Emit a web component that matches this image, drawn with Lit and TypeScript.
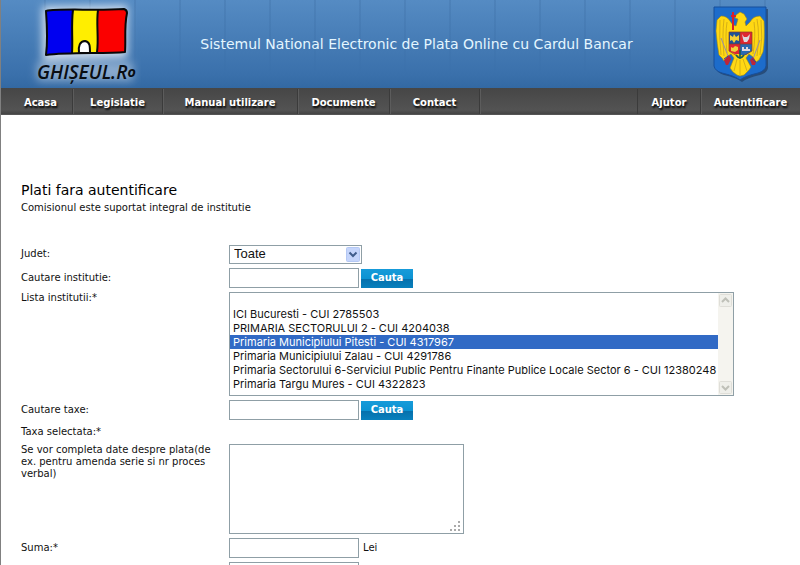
import { LitElement, html, css, svg } from "lit";
import { customElement, state } from "lit/decorators.js";

const flagLogo = svg`
  <svg class="logo" viewBox="0 0 120 88" width="120" height="88" role="img" aria-label="Ghiseul.ro">
    <defs>
      <filter id="glow" x="-20%" y="-20%" width="140%" height="140%">
        <feGaussianBlur stdDeviation="4"></feGaussianBlur>
      </filter>
    </defs>
    <g filter="url(#glow)" fill="#fff" stroke="#fff">
      <path d="M24 9L104 8L104 55L24 58Z" stroke-width="5" opacity=".75"></path>
      <path d="M18 64H110V79H18Z" opacity=".4" stroke-width="4"></path>
    </g>
    <path d="M25 11C39 8 74 11 103 9Q106 10 106 13C103 27 105 40 104 52C84 54 49 52 25 55C27 40 26 25 25 11Z" fill="#fe0"></path>
    <path d="M25 11Q37 8 52 10L51 53L25 55Q27 32 25 11Z" fill="#0000f0"></path>
    <path d="M77 10L103 9Q106 10 106 13C103 27 105 40 104 52L76 53Z" fill="#fb0000"></path>
    <g fill="none" stroke="#080808" stroke-width="2" stroke-linejoin="round" stroke-linecap="round">
      <path d="M25 11C39 8 74 11 103 9Q106 10 106 13C103 27 105 40 104 52C84 54 49 52 25 55C27 40 26 25 25 11Z"></path>
      <path d="M52 10C50 24 52 40 51 53"></path>
      <path d="M77 10C75 24 78 38 76 52"></path>
      <path d="M58 53C57 46 59 41 64 41C69 42 69 46 69 53Z" fill="#fff"></path>
    </g>
    <text x="16" y="79" class="brand">GHIȘEUL.R<tspan class="brand-small" dy="-2">O</tspan></text>
  </svg>`;

const coatOfArms = svg`
  <svg class="arms" viewBox="0 0 57 78" width="57" height="78" role="img" aria-label="Stema Romaniei">
    <path d="M3 4H55V63Q54 68 47 70Q34 73 29 77Q24 73 11 70Q4 68 3 63Z" fill="#1d3558" opacity=".6"></path>
    <path d="M1 2H53V61Q52 66 45 68Q32 71 27 75Q22 71 9 68Q2 66 1 61Z" fill="#1d6ccb" stroke="#174f9b"></path>
    <path d="M23 21Q19 20 17 16Q14 11 8 11L4 15L3 26Q4 39 6 50L9 53L11 56L15 51L18 49L21 53L17 63L20 67L24 70L27 71L31 70L36 65L38 62L33 53L36 49L40 52L43 57L46 55L50 47Q52 35 51 16L47 11Q40 11 37 17L33 21L32 17L34 14L31 9L27 7L23 10L22 13L25 14Z" fill="#ffd813" stroke="#9c8618" stroke-width=".6"></path>
    <g fill="none" stroke="#c39d18" stroke-width=".7">
      <path d="M7 15Q6 32 8 50M11 14Q9 30 11 51M14 17Q12 30 14 48M48 15Q50 32 47 50M44 14Q47 30 44 51M41 17Q43 30 40 49"></path>
      <path d="M24 54L21 66M27 55V70M30 54L34 66"></path>
    </g>
    <path d="M18 11H23M20 7V25" stroke="#d71f2b" stroke-width="2"></path>
    <path d="M8 33L15 51M47 35L40 54" stroke="#9791a4" stroke-width="1"></path>
    <path d="M11 55L16 50L18 54L15 60L13 60ZM37 55L40 52L43 57L42 60L39 60Z" fill="#bd2539"></path>
    <path d="M11 54L15 51M39 54L43 57" stroke="#2b4f9a" stroke-width="1"></path>
    <path d="M16 27H27V39H16Z" fill="#1d5298"></path>
    <path d="M27 27H39V39H27ZM16 39H27V49L22 49L16 46Z" fill="#df2632"></path>
    <path d="M27 39H39V46L33 50H27Z" fill="#2969b3"></path>
    <g fill="#f3d039">
      <path d="M17 30L20 32L21 29L23 32L26 30L26 36L23 35L21 38L19 35L17 36Z"></path>
      <path d="M18 42L20 43L22 41L25 42L25 45L22 47L18 46Z"></path>
    </g>
    <path d="M29 29L31 32L34 32L37 29L36 34L34 37L31 37L30 34ZM29 45V42H31V44H33V42H35V44H37V46H29Z" fill="#ddd8df"></path>
    <path d="M16 27H39V46Q34 49 27 52Q20 49 16 46ZM27 27V51M16 39H39" fill="none" stroke="#843e29" stroke-width=".7"></path>
    <path d="M27 45V54M23 50Q27 56 31 50" fill="none" stroke="#155f58" stroke-width="1.5"></path>
  </svg>`;

@customElement("app-root")
export class AppRoot extends LitElement {
  @state() private selected = 3;

  private institutions = [
    "",
    "ICI Bucuresti - CUI 2785503",
    "PRIMARIA SECTORULUI 2 - CUI 4204038",
    "Primaria Municipiului Pitesti - CUI 4317967",
    "Primaria Municipiului Zalau - CUI 4291786",
    "Primaria Sectorului 6-Serviciul Public Pentru Finante Publice Locale Sector 6 - CUI 12380248",
    "Primaria Targu Mures - CUI 4322823",
  ];

  static styles = css`
    :host {
      display: block;
      min-height: 100vh;
      box-sizing: border-box;
      border-left: 1px solid #808080;
      background: #fff;
      color: #111;
      font: 10px/12px Verdana, "DejaVu Sans", sans-serif;
      overflow: hidden;
    }
    * { box-sizing: border-box; }
    header {
      display: flex;
      align-items: center;
      height: 88px;
      padding-right: 30px;
      background:
        linear-gradient(transparent, #3a70ab 85%, #3369a3),
        repeating-linear-gradient(90deg, transparent 0 43px, rgba(25, 65, 115, 0.12) 43px 45px),
        #558bc3;
    }
    .home { flex: none; width: 159px; height: 88px; padding-left: 20px; }
    .logo, .arms { display: block; }
    .arms { flex: none; margin-left: 40px; }
    .brand {
      font: italic 600 19px "Open Sans", sans-serif;
      fill: #090d12;
    }
    .brand-small { font-size: 11px; font-weight: 800; }
    .slogan {
      flex: 1;
      text-align: center;
      font-size: 14px;
      line-height: 16px;
      color: #e4f6ff;
    }
    nav {
      display: flex;
      height: 27px;
      padding-top: 1px;
      background: linear-gradient(#464646, #535353 85%, #444);
      border-bottom: 1px solid #555;
    }
    nav a {
      flex: none;
      display: flex;
      align-items: center;
      justify-content: center;
      width: 90px;
      padding-top: 2px;
      border-right: 1px solid #3b3b3b;
      box-shadow: 1px 0 #5c5c5c;
      color: #fff;
      font-weight: bold;
      text-decoration: none;
      text-shadow: 1px 2px 2px #000;
    }
    nav .first { width: 72px; padding-left: 8px; }
    nav .wide { width: 135px; }
    nav .medium { width: 92px; }
    nav .right { width: 64px; margin-left: auto; border-left: 1px solid #3b3b3b; }
    nav .last { width: 99px; border-right: 0; box-shadow: none; }
    main { padding: 67px 20px 0; }
    h1 { margin: 0; font-size: 14px; line-height: 16px; font-weight: normal; color: #000; }
    .note { margin: 4px 0 30px; }
    form { display: flex; flex-direction: column; gap: 4px; }
    .row {
      display: grid;
      grid-template-columns: 200px minmax(0, 1fr);
      column-gap: 8px;
      align-items: center;
      min-height: 20px;
    }
    .top { align-items: start; }
    .short { min-height: 16px; }
    .field { display: flex; align-items: center; gap: 2px; }
    .unit { margin-left: 2px; }
    input, select, textarea {
      margin: 0;
      padding: 0 4px;
      border: 1px solid #8f9fa6;
      border-radius: 0;
      outline: 0;
      background: #fff;
      color: #111;
      font: 11px/14px Inter, Arial, sans-serif;
    }
    input { width: 130px; height: 20px; }
    button {
      width: 52px;
      height: 19px;
      padding: 0;
      border: 0;
      background: linear-gradient(#179bd9, #0b92d2 55%, #0571ad 55%, #0880bd);
      color: #fff;
      font: bold 10px/12px Verdana, "DejaVu Sans", sans-serif;
    }
    .drop { position: relative; width: 133px; height: 19px; }
    .drop select {
      appearance: none;
      display: block;
      width: 100%;
      height: 19px;
      font: 13px/16px Arial, "Liberation Sans", sans-serif;
    }
    .drop svg { position: absolute; right: 2px; top: 2px; pointer-events: none; }
    .list {
      display: flex;
      width: 100%;
      max-width: 505px;
      height: 104px;
      border: 1px solid #8f9fa6;
    }
    .list select {
      flex: 1;
      min-width: 0;
      height: 100%;
      padding: 0;
      border: 0;
      overflow: hidden;
    }
    .list option { height: 14px; min-height: 14px; padding: 0 3px; line-height: 14px; }
    .list option:checked { background: linear-gradient(#316ac5, #316ac5); color: #fff; }
    .bar {
      flex: none;
      display: flex;
      flex-direction: column;
      justify-content: space-between;
      width: 15px;
      background: #f5f4ef;
    }
    .bar svg { display: block; }
    textarea {
      display: block;
      width: 235px;
      height: 90px;
      resize: both;
    }
    textarea::-webkit-resizer {
      background: url("data:image/svg+xml,%3Csvg xmlns='http://www.w3.org/2000/svg' width='15' height='15'%3E%3Cpath d='M10 3h2v2h-2zM6 7h2v2H6zM10 7h2v2h-2zM2 11h2v2H2zM6 11h2v2H6zM10 11h2v2h-2z' fill='%23aaa'/%3E%3C/svg%3E");
    }
  `;

  private arrow(up: boolean) {
    return html`<svg width="15" height="15" viewBox="0 0 15 15">
      <rect x="1.5" y="1.5" width="12" height="12" rx="1" fill="#efefea" stroke="#dfded8"></rect>
      <path d=${up ? "M4 9L7.500 5.500L11 9" : "M4 6L7.500 9.500L11 6"} fill="none" stroke="#bfc0b8" stroke-width="2"></path>
    </svg>`;
  }

  private pick(e: Event) {
    this.selected = (e.target as HTMLSelectElement).selectedIndex;
  }

  render() {
    return html`
      <header>
        <a class="home" href="#">${flagLogo}</a>
        <div class="slogan">Sistemul National Electronic de Plata Online cu Cardul Bancar</div>
        ${coatOfArms}
      </header>
      <nav>
        <a class="first" href="#">Acasa</a>
        <a href="#">Legislatie</a>
        <a class="wide" href="#">Manual utilizare</a>
        <a class="medium" href="#">Documente</a>
        <a href="#">Contact</a>
        <a class="right" href="#">Ajutor</a>
        <a class="last" href="#">Autentificare</a>
      </nav>
      <main>
        <h1>Plati fara autentificare</h1>
        <p class="note">Comisionul este suportat integral de institutie</p>
        <form>
          <div class="row">
            <label for="county">Judet:</label>
            <div class="drop">
              <select id="county"><option>Toate</option></select>
              <svg width="14" height="15" viewBox="0 0 14 15">
                <rect x=".5" y=".5" width="13" height="14" rx="1" fill="#c5d5fb" stroke="#b4c8f4"></rect>
                <path d="M3.500 5.500L7 9L10.500 5.500" fill="none" stroke="#405d8b" stroke-width="2"></path>
              </svg>
            </div>
          </div>
          <div class="row">
            <label for="find-inst">Cautare institutie:</label>
            <div class="field"><input id="find-inst" type="text" /><button type="button">Cauta</button></div>
          </div>
          <div class="row top">
            <label for="inst">Lista institutii:*</label>
            <div class="list">
              <select id="inst" size="7" @change=${this.pick}>
                ${this.institutions.map(
                  (name, i) => html`<option value=${i} ?selected=${i === this.selected}>${name}</option>`
                )}
              </select>
              <div class="bar" aria-hidden="true">${this.arrow(true)}${this.arrow(false)}</div>
            </div>
          </div>
          <div class="row">
            <label for="find-tax">Cautare taxe:</label>
            <div class="field"><input id="find-tax" type="text" /><button type="button">Cauta</button></div>
          </div>
          <div class="row short"><span>Taxa selectata:*</span></div>
          <div class="row top">
            <label for="details">Se vor completa date despre plata(de ex. pentru amenda serie si nr proces verbal)</label>
            <textarea id="details"></textarea>
          </div>
          <div class="row">
            <label for="sum">Suma:*</label>
            <div class="field"><input id="sum" type="text" /><span class="unit">Lei</span></div>
          </div>
          <div class="row">
            <span></span>
            <input type="text" aria-label="Date suplimentare" />
          </div>
        </form>
      </main>
    `;
  }
}
